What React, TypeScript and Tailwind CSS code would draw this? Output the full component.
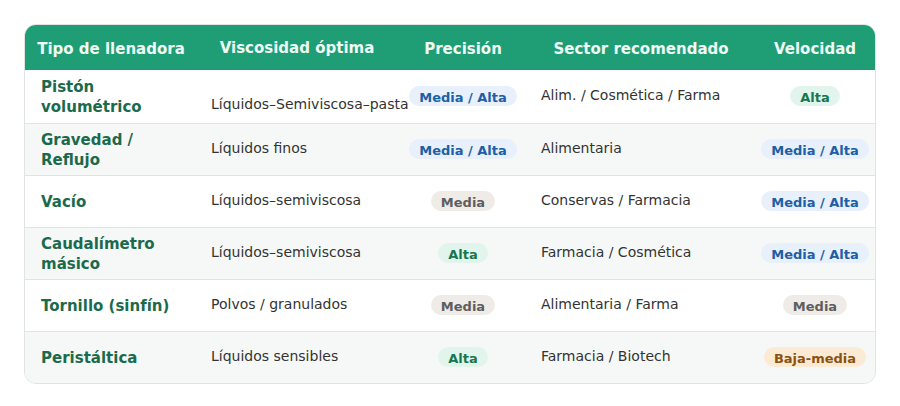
import React from "react";

type Tone = "blue" | "green" | "gray" | "orange";

const toneClass: Record<Tone, string> = {
  blue: "bg-[#e7f0fb] text-[#1f5fa6]",
  green: "bg-[#e2f5ed] text-[#17774f]",
  gray: "bg-[#efece7] text-[#5e5e5e]",
  orange: "bg-[#fcebd4] text-[#8a5312]",
};

const rows: {
  tipo: string[];
  visc: string;
  prec: [string, Tone];
  sector: string;
  vel: [string, Tone];
}[] = [
  {
    tipo: ["Pistón", "volumétrico"],
    visc: "Líquidos–Semiviscosa–pasta",
    prec: ["Media / Alta", "blue"],
    sector: "Alim. / Cosmética / Farma",
    vel: ["Alta", "green"],
  },
  {
    tipo: ["Gravedad /", "Reflujo"],
    visc: "Líquidos finos",
    prec: ["Media / Alta", "blue"],
    sector: "Alimentaria",
    vel: ["Media / Alta", "blue"],
  },
  {
    tipo: ["Vacío"],
    visc: "Líquidos–semiviscosa",
    prec: ["Media", "gray"],
    sector: "Conservas / Farmacia",
    vel: ["Media / Alta", "blue"],
  },
  {
    tipo: ["Caudalímetro", "másico"],
    visc: "Líquidos–semiviscosa",
    prec: ["Alta", "green"],
    sector: "Farmacia / Cosmética",
    vel: ["Media / Alta", "blue"],
  },
  {
    tipo: ["Tornillo (sinfín)"],
    visc: "Polvos / granulados",
    prec: ["Media", "gray"],
    sector: "Alimentaria / Farma",
    vel: ["Media", "gray"],
  },
  {
    tipo: ["Peristáltica"],
    visc: "Líquidos sensibles",
    prec: ["Alta", "green"],
    sector: "Farmacia / Biotech",
    vel: ["Baja-media", "orange"],
  },
];

const cols = "grid grid-cols-[172px_200px_132px_224px_124px]";

function Badge({ label, tone }: { label: string; tone: Tone }) {
  return (
    <span
      className={`inline-block whitespace-nowrap rounded-full px-[10px] pb-[1px] pt-[5px] text-[13px] font-bold leading-[14px] ${toneClass[tone]}`}
    >
      {label}
    </span>
  );
}

export default function App() {
  return (
    <div
      className="min-h-[406px] bg-white p-6"
      style={{ fontFamily: '"DejaVu Sans", Verdana, sans-serif' }}
    >
      <div className="overflow-hidden rounded-xl border border-[#dfe4e1]">
        <div
          className={`${cols} h-[45px] items-center bg-[#1f9e75] pt-[3px] text-[15px] font-bold text-[#effaf5]`}
        >
          <div className="text-center">Tipo de llenadora</div>
          <div className="pb-[2px] text-center">Viscosidad óptima</div>
          <div className="text-center">Precisión</div>
          <div className="text-center">Sector recomendado</div>
          <div className="text-center">Velocidad</div>
        </div>
        {rows.map((r, i) => (
          <div
            key={r.tipo.join(" ")}
            className={`${cols} ${i === 0 ? "h-[53px]" : "h-[52px] border-t border-[#dfe4e1]"} items-center ${i % 2 === 1 ? "bg-[#f6f8f7]" : "bg-white"}`}
          >
            <div className="pl-4 text-[15px] font-bold leading-[20px] text-[#1b6a4c]">
              {r.tipo.map((t) => (
                <div key={t}>{t}</div>
              ))}
            </div>
            <div
              className={`whitespace-nowrap pl-[14px] text-[14px] text-[#333] ${i === 0 ? "pt-4" : "pb-[3px]"}`}
            >
              {r.visc}
            </div>
            <div className="text-center">
              <Badge label={r.prec[0]} tone={r.prec[1]} />
            </div>
            <div className="pb-[3px] pl-3 text-[14px] text-[#333]">{r.sector}</div>
            <div className="text-center">
              <Badge label={r.vel[0]} tone={r.vel[1]} />
            </div>
          </div>
        ))}
      </div>
    </div>
  );
}
